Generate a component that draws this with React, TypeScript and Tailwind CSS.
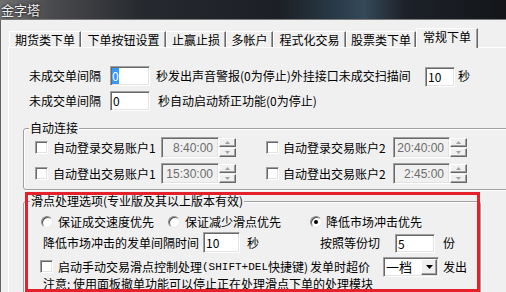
import React from "react";

const sunken =
  "border border-t-[#a0a0a0] border-l-[#a0a0a0] border-b-white border-r-white shadow-[inset_1px_1px_0_#696969,inset_-1px_-1px_0_#e3e3e3]";
const raised =
  "border border-t-white border-l-white border-b-[#696969] border-r-[#696969] shadow-[inset_-1px_-1px_0_#a0a0a0]";

function CheckBox({ className = "" }: { className?: string }) {
  return <div className={`w-[13px] h-[13px] shrink-0 bg-white ${sunken} ${className}`} />;
}

function Radio({ checked = false, className = "" }: { checked?: boolean; className?: string }) {
  return (
    <div
      className={`w-[12px] h-[12px] shrink-0 rounded-full bg-white border border-t-[#8a8a8a] border-l-[#8a8a8a] border-b-[#e8e8e8] border-r-[#e8e8e8] shadow-[inset_1px_1px_0_#505050] flex items-center justify-center ${className}`}
    >
      {checked && <div className="w-[4px] h-[4px] rounded-full bg-black" />}
    </div>
  );
}

function Arrow({ up }: { up?: boolean }) {
  return (
    <svg width="5" height="3" viewBox="0 0 5 3">
      <path d={up ? "M2.5 0 L5 3 L0 3 Z" : "M0 0 L5 0 L2.5 3 Z"} fill="#a0a0a0" />
    </svg>
  );
}

function TimeSpin({ value, fieldClass }: { value: string; fieldClass: string }) {
  return (
    <div className="flex h-[21px] shrink-0">
      <div
        className={`${fieldClass} h-full bg-[#f0f0f0] ${sunken} flex items-center justify-end pr-[5px] text-[#6d6d6d] font-['Liberation_Sans',sans-serif] text-[12px]`}
      >
        {value}
      </div>
      <div className="w-[17px] flex flex-col gap-[1px] py-[1px]">
        <div className={`flex-1 bg-[#f0f0f0] ${raised} flex items-center justify-center`}>
          <Arrow up />
        </div>
        <div className={`flex-1 bg-[#f0f0f0] ${raised} flex items-center justify-center`}>
          <Arrow />
        </div>
      </div>
    </div>
  );
}

const tabs = [
  { label: "期货类下单", w: "w-[72px]" },
  { label: "下单按钮设置", w: "w-[85px]" },
  { label: "止赢止损", w: "w-[60px]" },
  { label: "多帐户", w: "w-[47px]" },
  { label: "程式化交易", w: "w-[73px]" },
  { label: "股票类下单", w: "w-[70px]" },
];

export default function App() {
  return (
    <div className="w-[506px] h-[292px] overflow-hidden flex flex-col bg-[#f0f0f0] text-[12px] leading-[14px] text-black font-['Noto_Sans_CJK_SC','Noto_Sans',sans-serif]">
      {/* title bar */}
      <div className="h-[20px] shrink-0 border-b border-[#7c7c7c] bg-[linear-gradient(90deg,#707070_0%,#4a4b4e_10%,#26292e_28%,#1c1f25_55%,#283a47_66%,#34495a_72%,#1d2129_80%,#131519_100%)] flex items-center pl-[1px]">
        <span className="text-[13px] text-[#eeeeee] [text-shadow:0_0_3px_#000]">金字塔</span>
      </div>

      <div className="flex-1 relative border-l border-[#646464] bg-[#f0f0f0]">
        {/* tabs */}
        <div className="flex items-end h-[27px] pl-[8px]">
          {tabs.map((t) => (
            <div
              key={t.label}
              className={`${t.w} h-[16px] flex items-center justify-center border-t border-l border-white border-r border-r-[#696969] shadow-[inset_-1px_0_0_#a0a0a0] whitespace-nowrap`}
            >
              {t.label}
            </div>
          ))}
          <div className="w-[62px] h-[20px] -mb-px relative z-10 bg-[#f0f0f0] flex items-center justify-center pb-[3px] border-t border-l border-white border-r border-r-[#696969] shadow-[inset_-1px_0_0_#a0a0a0] whitespace-nowrap">
            常规下单
          </div>
        </div>

        {/* panel */}
        <div className="ml-[7px] w-[520px] h-[260px] border-t border-l border-white">
          <div className="mt-[18px] h-[20px] flex items-center pl-[20px] whitespace-nowrap">
            <span className="w-[81px] shrink-0">未成交单间隔</span>
            <div className={`w-[40px] h-[20px] shrink-0 bg-white ${sunken} flex items-center pl-[1px]`}>
              <span className="bg-[#3399ff] text-white leading-[16px]">0</span>
            </div>
            <span className="ml-[6px] w-[269px] shrink-0">秒发出声音警报(0为停止)外挂接口未成交扫描间</span>
            <div className={`w-[30px] h-[20px] mt-[2px] shrink-0 bg-white ${sunken} flex items-center pl-[2px]`}>10</div>
            <span className="ml-[3px]">秒</span>
          </div>

          <div className="mt-[5px] h-[20px] flex items-center pl-[20px] whitespace-nowrap">
            <span className="w-[81px] shrink-0">未成交单间隔</span>
            <div className={`w-[40px] h-[20px] shrink-0 bg-white ${sunken} flex items-center pl-[2px]`}>0</div>
            <span className="ml-[8px]">秒自动启动矫正功能(0为停止)</span>
          </div>

          {/* 自动连接 */}
          <div className="mt-[17px] ml-[14px] w-[520px] h-[62px] border border-[#a0a0a0] rounded-[3px] shadow-[inset_1px_1px_0_#fff,1px_1px_0_#fff]">
            <div className="-mt-[8px] ml-[5px] h-[14px] w-fit px-[1px] bg-[#f0f0f0]">自动连接</div>
            <div className="mt-[2px] h-[21px] flex items-center whitespace-nowrap">
              <CheckBox className="ml-[11px]" />
              <span className="ml-[5px] w-[108px] shrink-0">自动登录交易账户1</span>
              <TimeSpin value="8:40:00" fieldClass="w-[58px]" />
              <CheckBox className="ml-[30px]" />
              <span className="ml-[4px] w-[110px] shrink-0">自动登录交易账户2</span>
              <TimeSpin value="20:40:00" fieldClass="w-[57px]" />
            </div>
            <div className="mt-[5px] h-[21px] flex items-center whitespace-nowrap">
              <CheckBox className="ml-[11px]" />
              <span className="ml-[5px] w-[108px] shrink-0">自动登出交易账户1</span>
              <TimeSpin value="15:30:00" fieldClass="w-[58px]" />
              <CheckBox className="ml-[30px]" />
              <span className="ml-[4px] w-[110px] shrink-0">自动登出交易账户2</span>
              <TimeSpin value="2:45:00" fieldClass="w-[57px]" />
            </div>
          </div>

          {/* 滑点处理选项 */}
          <div className="mt-[11px] ml-[14px] w-[458px] h-[120px] border border-[#a0a0a0] rounded-[3px] shadow-[inset_1px_1px_0_#fff,1px_1px_0_#fff]">
            <div className="-mt-[8px] ml-[6px] h-[14px] w-fit px-[1px] bg-[#f0f0f0] whitespace-nowrap">
              滑点处理选项(专业版及其以上版本有效)
            </div>
            <div className="mt-[6px] h-[16px] flex items-center whitespace-nowrap">
              <Radio className="ml-[17px]" />
              <span className="ml-[5px] w-[96px] shrink-0">保证成交速度优先</span>
              <Radio className="ml-[14px]" />
              <span className="ml-[5px] w-[96px] shrink-0">保证减少滑点优先</span>
              <Radio checked className="ml-[29px]" />
              <span className="ml-[4px]">降低市场冲击优先</span>
            </div>
            <div className="mt-[2px] h-[21px] flex items-center whitespace-nowrap">
              <span className="ml-[19px] w-[160px] shrink-0">降低市场冲击的发单间隔时间</span>
              <div className={`w-[37px] h-[21px] shrink-0 bg-white ${sunken} flex items-center pl-[2px]`}>10</div>
              <span className="ml-[7px] w-[12px] shrink-0">秒</span>
              <span className="ml-[61px] w-[60px] shrink-0">按照等份切</span>
              <div className={`ml-[15px] w-[40px] h-[19px] mt-[2px] shrink-0 bg-white ${sunken} flex items-center pl-[2px]`}>5</div>
              <span className="ml-[8px]">份</span>
            </div>
            <div className="mt-[3px] h-[21px] flex items-center whitespace-nowrap">
              <CheckBox className="ml-[16px]" />
              <span className="ml-[5px] w-[252px] shrink-0 flex items-center">
                启动手动交易滑点控制处理
                <span className="font-['Liberation_Mono',monospace] text-[11px]">(SHIFT+DEL</span>
                快捷键)
              </span>
              <span className="w-[73px] shrink-0">发单时超价</span>
              <div className={`w-[56px] h-[20px] shrink-0 bg-white ${sunken} flex items-center`}>
                <span className="flex-1 pl-[2px] text-[13px]">一档</span>
                <div className={`w-[16px] h-[16px] mr-[1px] bg-[#f0f0f0] ${raised} flex items-center justify-center`}>
                  <svg width="7" height="4" viewBox="0 0 7 4">
                    <path d="M0 0 L7 0 L3.5 4 Z" fill="#000" />
                  </svg>
                </div>
              </div>
              <span className="ml-[4px]">发出</span>
            </div>
            <div className="h-[14px] flex items-center whitespace-nowrap">
              <span className="ml-[19px]">注意: 使用面板撤单功能可以停止正在处理滑点下单的处理模块</span>
            </div>
          </div>
        </div>

        {/* red annotation */}
        <div className="absolute left-[24px] top-[172px] w-[455px] h-[100px] border-[3px] border-[#e4212b] pointer-events-none" />
      </div>
    </div>
  );
}
